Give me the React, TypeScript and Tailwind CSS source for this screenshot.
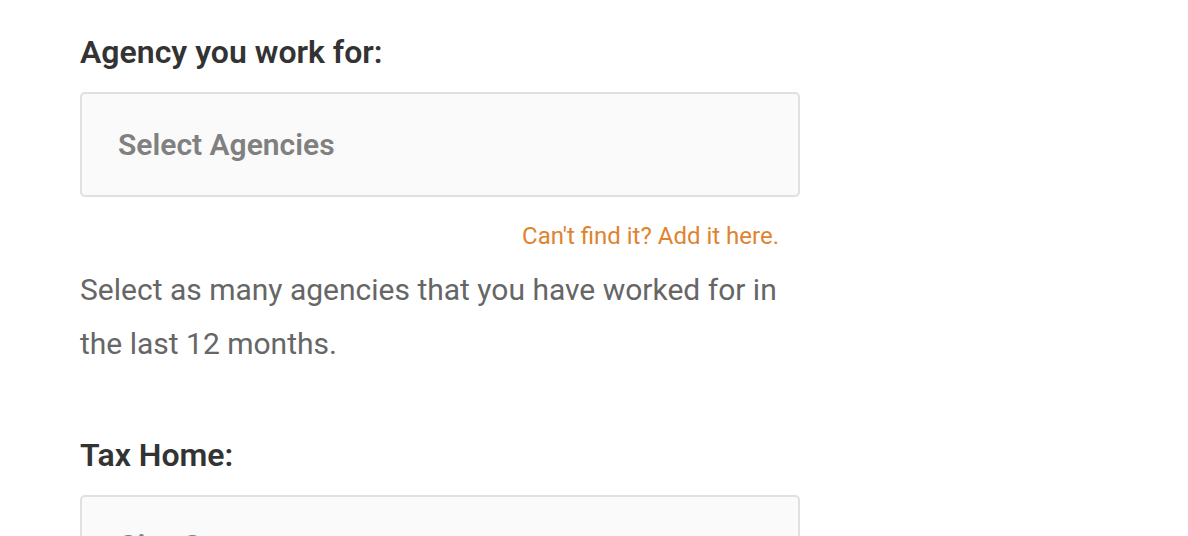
import React from 'react';

function Field({ label, placeholder, shift }: { label: string; placeholder: string; shift?: boolean }) {
    return (
        <div>
            <h3 className="text-[32px] leading-[40px] font-semibold text-[#333333] mb-[20px]">{label}</h3>
            <div className={`w-[720px] h-[105px] border-2 border-[#e0e0e0] rounded-[5px] bg-[#fafafa] flex items-center pl-[36px] ${shift ? 'pb-[4px]' : ''}`}>
                <span className="text-[30px] font-semibold text-[#808080]">{placeholder}</span>
            </div>
        </div>
    );
}

export default function App() {
    return (
        <div className="w-full bg-white font-['Roboto',sans-serif] pl-[80px] pt-[32px] overflow-hidden h-[536px]">
            <Field label="Agency you work for:" placeholder="Select Agencies" />
            <div className="w-[720px] flex justify-end pr-[21px] mt-[23px]">
                <a className="text-[24px] leading-[32px] text-[#e0832f] cursor-pointer">Can't find it? Add it here.</a>
            </div>
            <p className="w-[720px] text-[30px] leading-[54px] text-[#666666] mt-[11px] mb-[64px]">
                Select as many agencies that you have worked for in the last 12 months.
            </p>
            <Field label="Tax Home:" placeholder="City, State" shift />
        </div>
    );
}
